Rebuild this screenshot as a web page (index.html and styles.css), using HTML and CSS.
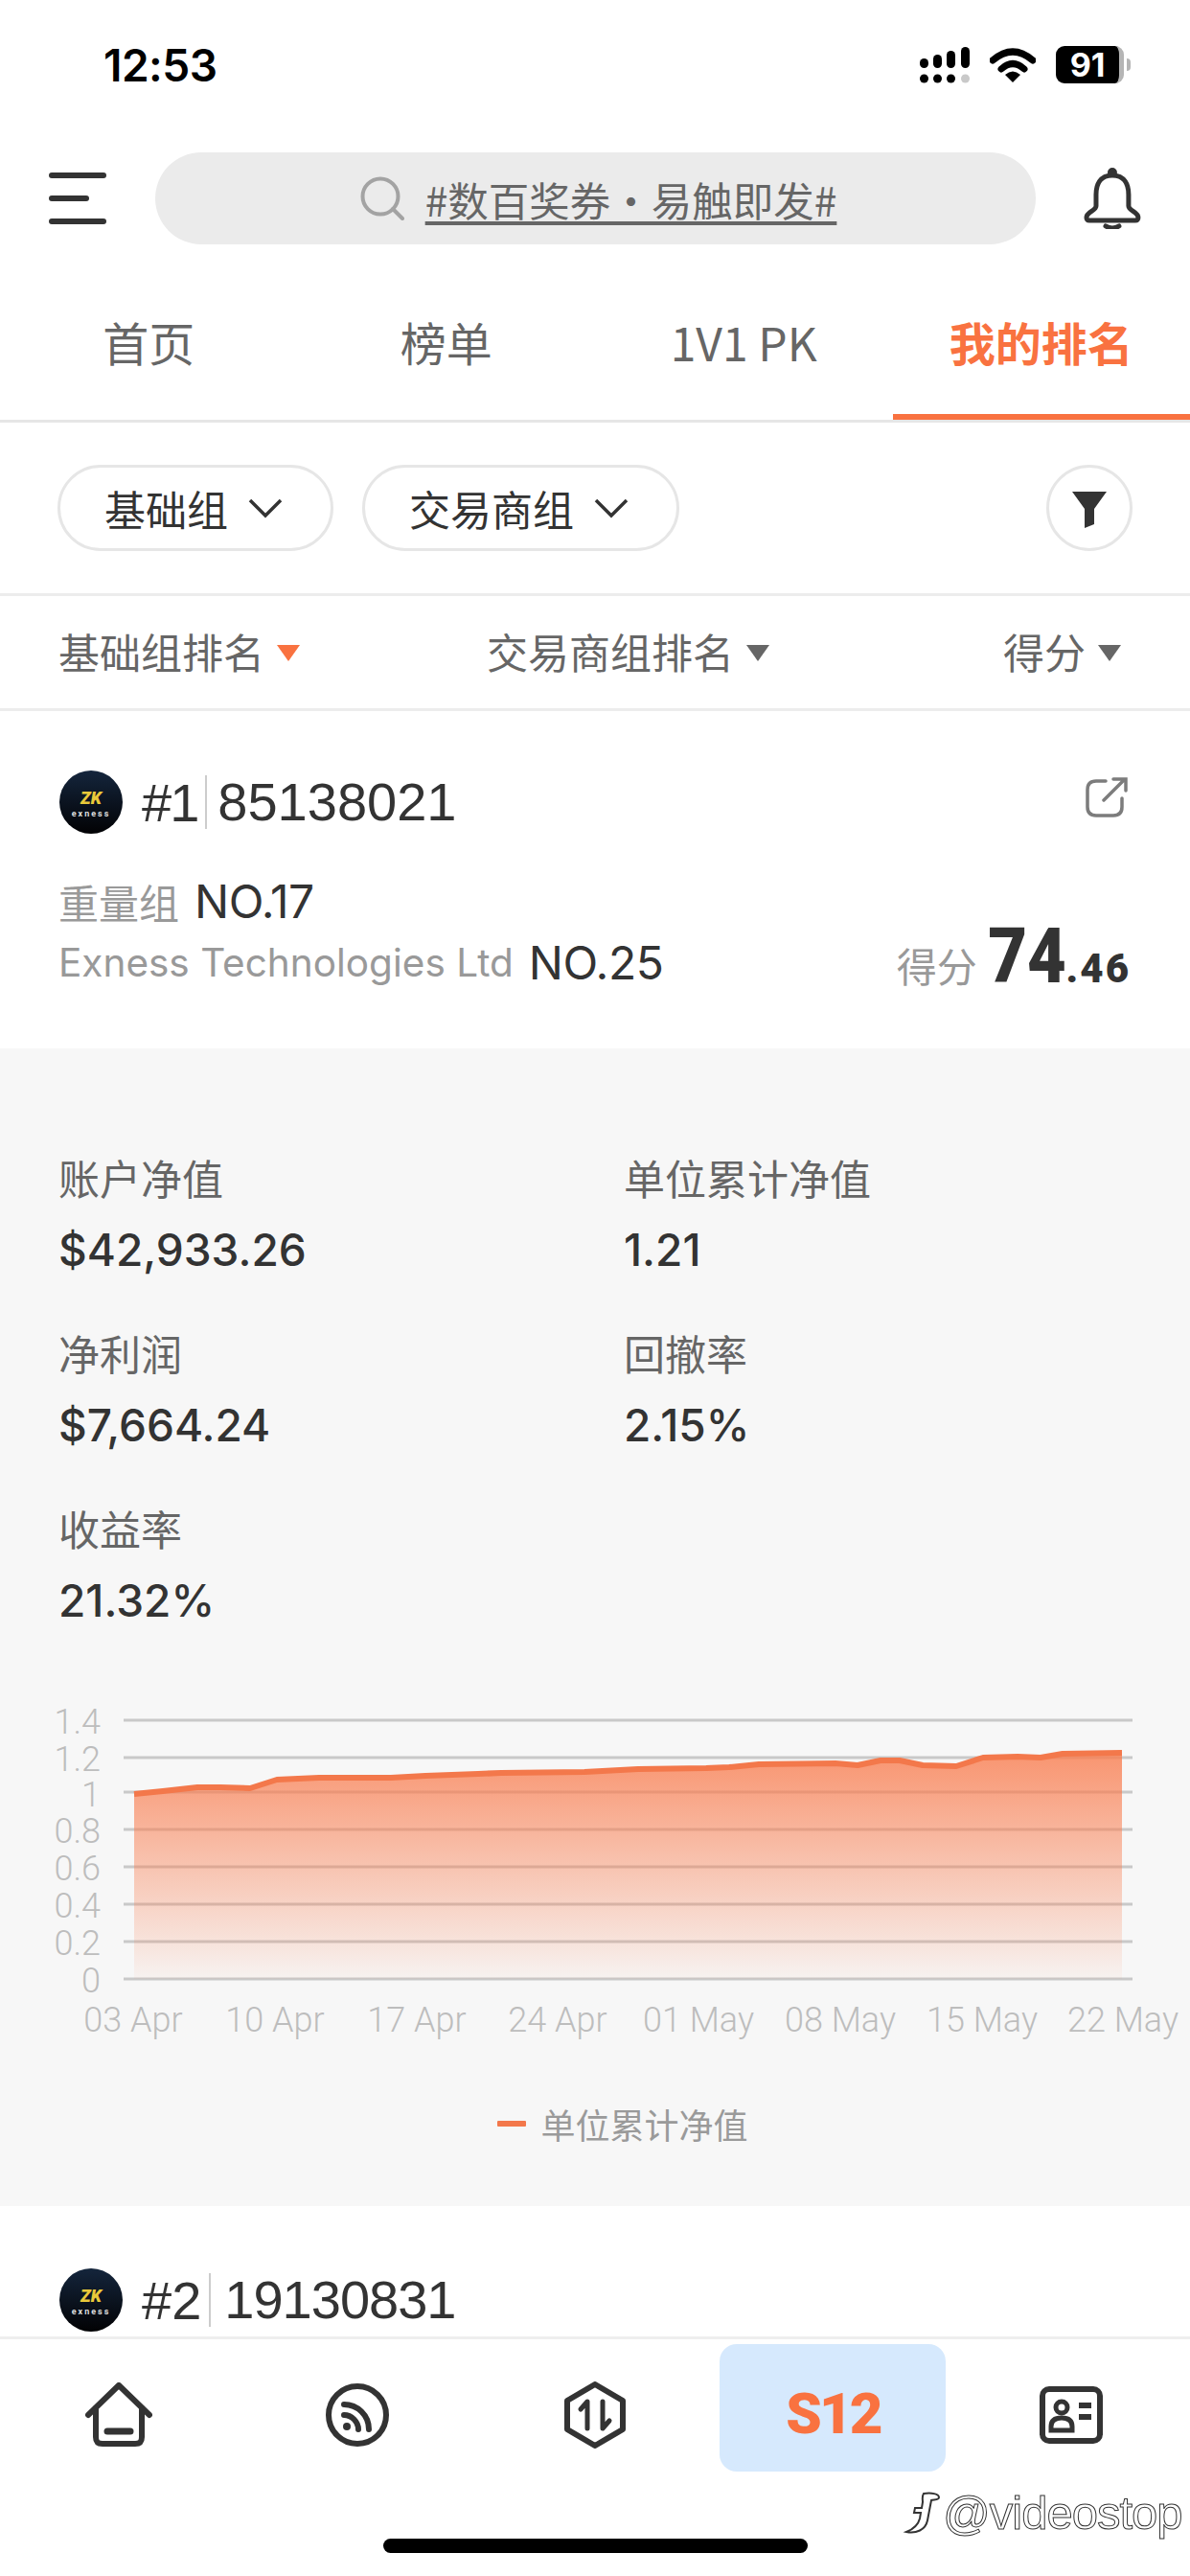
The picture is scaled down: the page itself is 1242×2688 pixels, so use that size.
FILE: index.html
```html
<!DOCTYPE html>
<html lang="zh-CN">
<head>
    <meta charset="UTF-8">
    <meta name="viewport" content="width=device-width, initial-scale=1.0">
    <title>我的排名</title>
    <link rel="stylesheet" href="styles.css">
</head>
<body>
    <div class="status-bar">
        <span class="time">12:53</span>
        <div class="status-icons">
            <svg class="signal" width="52" height="38" viewBox="0 0 52 38">
                <rect x="0" y="12" width="9" height="10" rx="4.5"/><rect x="14" y="8" width="9" height="14" rx="4.5"/><rect x="28" y="4" width="9" height="18" rx="4.5"/><rect x="43" y="0" width="9" height="22" rx="4.5"/>
                <circle cx="4.5" cy="33" r="4.5"/><circle cx="18.5" cy="33" r="4.5"/><circle cx="32.5" cy="33" r="4.5"/><circle cx="47.5" cy="33" r="4.5" fill="#c9c9c9"/>
            </svg>
            <svg class="wifi" width="48" height="36" viewBox="0 0 48 36">
                <path d="M3 13 Q24 -5 45 13" fill="none" stroke="#000" stroke-width="7" stroke-linecap="round"/>
                <path d="M12 22 Q24 11 36 22" fill="none" stroke="#000" stroke-width="7" stroke-linecap="round"/>
                <path d="M16 28 Q24 21 32 28 L24 36 Z"/>
            </svg>
            <div class="battery">
                <div class="battery-body">91</div>
                <div class="battery-tip"></div>
            </div>
        </div>
    </div>

    <header class="top-bar">
        <div class="menu-icon"><span></span><span class="short"></span><span></span></div>
        <div class="search">
            <svg width="46" height="46" viewBox="0 0 46 46" fill="none" stroke="#a3a3a3" stroke-width="4">
                <circle cx="21" cy="21" r="18.5"/>
                <path d="M34 34 L44 44" stroke-linecap="round"/>
            </svg>
            <span class="search-text">#数百奖券·易触即发#</span>
        </div>
        <svg class="bell" width="60" height="64" viewBox="0 0 60 64" fill="none" stroke="#333" stroke-width="5">
            <path d="M30 8 C17 8 13 18 13 28 V40 C13 45 3 46 3 52 C3 54 4 55 6 55 H54 C56 55 57 54 57 52 C57 46 47 45 47 40 V28 C47 18 43 8 30 8 Z"/>
            <circle cx="30" cy="5" r="2.5"/>
            <path d="M23 61 Q30 65 37 61" stroke-linecap="round"/>
        </svg>
    </header>

    <nav class="tabs">
        <a class="tab">首页</a>
        <a class="tab">榜单</a>
        <a class="tab">1V1 PK</a>
        <a class="tab active">我的排名</a>
    </nav>

    <div class="filter-row">
        <div class="pill">基础组
            <svg width="38" height="22" viewBox="0 0 36 22" fill="none" stroke="#333" stroke-width="3.5"><path d="M2 3 L18 19 L34 3"/></svg>
        </div>
        <div class="pill">交易商组
            <svg width="38" height="22" viewBox="0 0 36 22" fill="none" stroke="#333" stroke-width="3.5"><path d="M2 3 L18 19 L34 3"/></svg>
        </div>
        <div class="filter-btn">
            <svg width="36" height="38" viewBox="0 0 36 38" fill="#333"><path d="M0 0 H36 L23 18 V34 L13 38 V18 Z"/></svg>
        </div>
    </div>

    <div class="sort-row">
        <span class="sort-item sort-on">基础组排名</span>
        <span class="sort-item">交易商组排名</span>
        <span class="sort-item">得分</span>
    </div>

    <main class="list">
        <section class="card">
            <div class="card-title">
                <svg class="logo" width="66" height="66" viewBox="0 0 66 66">
                    <defs>
                        <linearGradient id="logoBg" x1="0" y1="0" x2="0" y2="1">
                            <stop offset="0" stop-color="#14253c"/>
                            <stop offset="1" stop-color="#020204"/>
                        </linearGradient>
                    </defs>
                    <circle cx="33" cy="33" r="33" fill="url(#logoBg)"/>
                    <text x="33" y="35" class="logo-mark">ZK</text>
                    <text x="33" y="48" class="logo-name">exness</text>
                </svg>
                <span class="rank">#1</span>
                <span class="account">85138021</span>
                <svg class="share" width="44" height="42" viewBox="0 0 44 42" fill="none" stroke="#7c7c7c" stroke-width="3.5" stroke-linecap="round">
                    <path d="M21 4 H11 C5 4 2 7 2 13 V31 C2 37 5 40 11 40 H29 C35 40 38 37 38 31 V22"/>
                    <path d="M19 24 L41 2 M29 2 H42 V14"/>
                </svg>
            </div>
            <div class="card-meta">
                <div>
                    <div class="meta-line"><span class="muted">重量组</span><b>NO.17</b></div>
                    <div class="meta-line"><span class="muted">Exness Technologies Ltd</span><b>NO.25</b></div>
                </div>
                <div class="score"><span class="muted">得分</span><span class="score-big">74</span><span class="score-small">.46</span></div>
            </div>
        </section>

        <section class="panel">
            <div class="stats">
                <div class="stat"><label>账户净值</label><strong>$42,933.26</strong></div>
                <div class="stat"><label>单位累计净值</label><strong>1.21</strong></div>
                <div class="stat"><label>净利润</label><strong>$7,664.24</strong></div>
                <div class="stat"><label>回撤率</label><strong>2.15%</strong></div>
                <div class="stat"><label>收益率</label><strong>21.32%</strong></div>
            </div>

            <svg class="chart" width="1242" height="370" viewBox="0 1770 1242 370">
                <defs>
                    <linearGradient id="areaFill" x1="0" y1="0" x2="0" y2="1">
                        <stop offset="0" stop-color="#f97c4e" stop-opacity="0.8"/>
                        <stop offset="1" stop-color="#f97c4e" stop-opacity="0.04"/>
                    </linearGradient>
                </defs>
                <g class="grid-lines">
                    <path d="M129 1795 H1182"/><path d="M129 1834 H1182"/><path d="M129 1870 H1182"/><path d="M129 1909 H1182"/>
                    <path d="M129 1948 H1182"/><path d="M129 1987 H1182"/><path d="M129 2026 H1182"/><path d="M129 2065 H1182"/>
                </g>
                <path fill="url(#areaFill)" d="M140 1872 L170 1869 L206 1865 L230 1865 L261 1866 L289 1857 L333 1855 L408 1855 L444 1853 L499 1851 L523 1850 L610 1849 L666 1846 L737 1845 L761 1844 L792 1841 L872 1840 L895 1842 L919 1837 L939 1837 L963 1842 L998 1843 L1026 1834 L1062 1833 L1086 1834 L1109 1830 L1171 1829 V2065 H140 Z"/>
                <path class="area-line" d="M140 1872 L170 1869 L206 1865 L230 1865 L261 1866 L289 1857 L333 1855 L408 1855 L444 1853 L499 1851 L523 1850 L610 1849 L666 1846 L737 1845 L761 1844 L792 1841 L872 1840 L895 1842 L919 1837 L939 1837 L963 1842 L998 1843 L1026 1834 L1062 1833 L1086 1834 L1109 1830 L1171 1829"/>
                <g class="y-labels">
                    <text x="105" y="1809">1.4</text><text x="105" y="1848">1.2</text><text x="105" y="1885">1</text><text x="105" y="1923">0.8</text>
                    <text x="105" y="1962">0.6</text><text x="105" y="2001">0.4</text><text x="105" y="2040">0.2</text><text x="105" y="2079">0</text>
                </g>
                <g class="x-labels">
                    <text x="139" y="2120">03 Apr</text><text x="287" y="2120">10 Apr</text><text x="435" y="2120">17 Apr</text><text x="582" y="2120">24 Apr</text>
                    <text x="729" y="2120">01 May</text><text x="877" y="2120">08 May</text><text x="1025" y="2120">15 May</text><text x="1172" y="2120">22 May</text>
                </g>
            </svg>

            <div class="legend"><i></i>单位累计净值</div>
        </section>

        <section class="card card-next">
            <div class="card-title">
                <svg class="logo" width="66" height="66" viewBox="0 0 66 66">
                    <circle cx="33" cy="33" r="33" fill="url(#logoBg)"/>
                    <text x="33" y="35" class="logo-mark">ZK</text>
                    <text x="33" y="48" class="logo-name">exness</text>
                </svg>
                <span class="rank">#2</span>
                <span class="account">19130831</span>
            </div>
        </section>
    </main>

    <footer class="bottom-nav">
        <a class="nav-item">
            <svg width="70" height="68" viewBox="0 0 70 68" fill="none" stroke="#333" stroke-width="6" stroke-linejoin="round" stroke-linecap="round">
                <path d="M3 34 L35 3 L67 34"/>
                <path d="M11 27 V57 C11 62 13 64 18 64 H52 C57 64 59 62 59 57 V27"/>
                <path d="M23 51 H47" stroke-width="7"/>
            </svg>
        </a>
        <a class="nav-item">
            <svg width="66" height="66" viewBox="0 0 66 66" fill="none" stroke="#333" stroke-width="6" stroke-linecap="round">
                <circle cx="33" cy="33" r="30"/>
                <path d="M19 22 C33 22 45 33 45 48"/>
                <path d="M19 33 C27 33 34 40 34 48"/>
                <circle cx="22" cy="45" r="4" fill="#333" stroke="none"/>
            </svg>
        </a>
        <a class="nav-item">
            <svg width="64" height="70" viewBox="0 0 64 70" fill="none" stroke="#333" stroke-width="6" stroke-linejoin="round" stroke-linecap="round">
                <path d="M32 3 L61 20 V50 L32 67 L3 50 V20 Z"/>
                <path d="M24 49 V21 L17 29" stroke-width="5"/>
                <path d="M40 21 V49 L47 41" stroke-width="5"/>
            </svg>
        </a>
        <a class="nav-item">
            <div class="s12-box"><span>S12</span></div>
        </a>
        <a class="nav-item">
            <svg width="66" height="60" viewBox="0 0 66 60" fill="none" stroke="#333" stroke-width="6">
                <rect x="3" y="3" width="60" height="54" rx="7"/>
                <circle cx="23" cy="22" r="6" stroke-width="5"/>
                <path d="M12 46 V42 C12 36 16 33 23 33 C30 33 34 36 34 42 V46 Z" stroke-width="5"/>
                <path d="M41 20 H54 M41 32 H54" stroke-width="6"/>
            </svg>
        </a>
    </footer>

    <div class="watermark">
        <svg width="40" height="44" viewBox="0 0 40 44" fill="#fff" stroke="#333" stroke-width="2">
            <path d="M22 2 C30 1 38 2 38 6 C38 9 32 8 30 9 L26 30 C24 40 14 44 4 42 C9 40 16 36 18 28 L19 22 H12 L13 17 H20 L21 11 C21 8 20 5 22 2 Z"/>
        </svg>
        <span>@videostop</span>
    </div>
    <div class="home-indicator"></div>
</body>
</html>
```

FILE: styles.css
```css
* {
    box-sizing: border-box;
}

html, body {
    margin: 0;
    padding: 0;
}

body {
    position: relative;
    width: 1242px;
    height: 2688px;
    overflow: hidden;
    background: #fff;
    color: #333;
    font-family: Inter, "Noto Sans CJK SC", sans-serif;
    display: flex;
    flex-direction: column;
}

/* status bar */
.status-bar {
    height: 135px;
    flex-shrink: 0;
    display: flex;
    align-items: center;
    justify-content: space-between;
    padding: 0 62px 0 108px;
}

.time {
    font-family: Inter, sans-serif;
    font-size: 46px;
    font-weight: 600;
    letter-spacing: -0.5px;
    color: #000;
}

.status-icons {
    display: flex;
    align-items: center;
    gap: 21px;
}

.battery {
    display: flex;
    align-items: center;
    gap: 3px;
}

.battery-body {
    width: 71px;
    height: 39px;
    background: #000;
    color: #fff;
    border-radius: 9px;
    border-right: 5px solid #b5b5b5;
    font-family: Inter, sans-serif;
    font-size: 34px;
    font-weight: 700;
    line-height: 39px;
    text-align: center;
}

.battery-tip {
    width: 4px;
    height: 13px;
    background: #b5b5b5;
    border-radius: 0 4px 4px 0;
}

/* search bar */
.top-bar {
    height: 144px;
    flex-shrink: 0;
    display: flex;
    align-items: center;
    padding: 0 51px;
}

.menu-icon {
    width: 60px;
    display: flex;
    flex-direction: column;
    gap: 18px;
}

.menu-icon span {
    display: block;
    height: 6px;
    border-radius: 3px;
    background: #333;
}

.menu-icon .short {
    width: 42px;
}

.search {
    width: 921px;
    height: 96px;
    margin-left: 51px;
    padding-left: 6px;
    border-radius: 48px;
    background: #ebebeb;
    display: flex;
    align-items: center;
    justify-content: center;
    gap: 22px;
}

.search-text {
    font-family: "Noto Sans CJK SC", sans-serif;
    font-size: 42.5px;
    color: #666;
    text-decoration: underline;
    text-underline-offset: 5px;
}

.bell {
    margin-left: 50px;
}

/* tabs */
.tabs {
    height: 162px;
    flex-shrink: 0;
    display: grid;
    grid-template-columns: repeat(4, 1fr);
    border-bottom: 3px solid #e6e6e6;
}

.tab {
    display: flex;
    align-items: center;
    justify-content: center;
    border-bottom: 6px solid transparent;
    font-family: "Noto Sans CJK SC", sans-serif;
    font-size: 48px;
    color: #666;
}

.tab.active {
    color: #f97240;
    font-weight: 700;
    border-bottom-color: #f97240;
}

/* filters */
.filter-row {
    height: 181px;
    flex-shrink: 0;
    display: flex;
    align-items: center;
    gap: 30px;
    padding: 1px 60px 1px 60px;
    border-bottom: 3px solid #ececec;
}

.pill {
    height: 90px;
    padding: 0 49px 0 46px;
    display: flex;
    align-items: center;
    gap: 20px;
    border: 3px solid #e6e6e6;
    border-radius: 45px;
    font-family: "Noto Sans CJK SC", sans-serif;
    font-size: 43px;
    color: #333;
}

.filter-btn {
    width: 90px;
    height: 90px;
    margin-left: auto;
    border: 3px solid #e6e6e6;
    border-radius: 50%;
    display: flex;
    align-items: center;
    justify-content: center;
    padding-top: 4px;
}

.sort-row {
    height: 120px;
    flex-shrink: 0;
    display: grid;
    grid-template-columns: 447px 1fr auto;
    align-items: center;
    padding: 0 72px 3px 61px;
    border-bottom: 3px solid #ececec;
}

.sort-item {
    display: flex;
    align-items: center;
    gap: 13px;
    font-family: "Noto Sans CJK SC", sans-serif;
    font-size: 43px;
    color: #666;
}

.sort-item::after {
    content: "";
    margin-top: 5px;
    border-left: 12px solid transparent;
    border-right: 12px solid transparent;
    border-top: 17px solid #666;
}

.sort-item.sort-on::after {
    border-top-color: #f97240;
}

/* ranking list */
.list {
    flex: 1;
    min-height: 0;
    overflow: hidden;
}

.card {
    height: 352px;
    padding: 62px 62px 0 61px;
}

.card-next {
    height: auto;
    padding-top: 65px;
}

.card-title {
    display: flex;
    align-items: center;
    height: 66px;
}

.logo {
    flex-shrink: 0;
    margin-left: 1px;
}

.logo-mark {
    font-family: Roboto, sans-serif;
    font-size: 18px;
    font-weight: 900;
    font-style: italic;
    fill: #e9c93a;
    text-anchor: middle;
}

.logo-name {
    font-family: Roboto, sans-serif;
    font-size: 9px;
    font-weight: 700;
    letter-spacing: 2px;
    fill: #dedede;
    text-anchor: middle;
}

.rank {
    margin-left: 20px;
    padding-right: 8px;
    font-family: "Liberation Sans", sans-serif;
    font-size: 56px;
    letter-spacing: -2px;
    color: #333;
}

.account {
    padding-left: 11px;
    border-left: 2px solid #ccc;
    font-family: "Liberation Sans", sans-serif;
    font-size: 56px;
    line-height: 56px;
    color: #333;
}

.card-next .rank {
    letter-spacing: 0;
}

.card-next .account {
    padding-left: 14px;
    letter-spacing: -1px;
}

.share {
    margin-left: auto;
    margin-right: 3px;
    margin-bottom: 10px;
}

.card-meta {
    display: flex;
    justify-content: space-between;
    align-items: flex-end;
    margin-top: 38px;
}

.meta-line {
    height: 64px;
    display: flex;
    align-items: center;
    gap: 16px;
    font-size: 42px;
}

.meta-line b {
    font-weight: 400;
    font-size: 48px;
    letter-spacing: -0.5px;
    color: #333;
}

.muted {
    font-family: Inter, "Noto Sans CJK SC", sans-serif;
    font-size: 40.5px;
    color: #999;
}

.meta-line:first-child .muted {
    font-size: 42px;
}

.score {
    display: flex;
    align-items: baseline;
    margin-bottom: -2px;
}

.score .muted {
    font-size: 42px;
    margin-right: 0;
}

/* the big digits are a narrow black face in the reference */
.score-big {
    display: inline-block;
    font-family: Roboto, sans-serif;
    font-size: 80px;
    font-weight: 900;
    line-height: 80px;
    color: #333;
    transform: scaleX(0.88);
    transform-origin: right;
}

.score-small {
    font-family: Roboto, sans-serif;
    font-size: 42px;
    font-weight: 900;
    letter-spacing: 2px;
    color: #333;
}

/* stats and chart */
.panel {
    height: 1208px;
    background: #f7f7f7;
    overflow: hidden;
}

.stats {
    display: grid;
    grid-template-columns: 590px 1fr;
    grid-auto-rows: 183px;
    padding: 105px 62px 0 61px;
    height: 676px;
}

.stat {
    display: flex;
    flex-direction: column;
    gap: 18px;
}

.stat label {
    font-family: "Noto Sans CJK SC", sans-serif;
    font-size: 43px;
    line-height: 58px;
    color: #666;
}

.stat strong {
    font-size: 46px;
    line-height: 58px;
    font-weight: 500;
    color: #333;
}

.chart {
    display: block;
}

.grid-lines path {
    stroke: #c9c9c9;
    stroke-width: 3;
}

.area-line {
    fill: none;
    stroke: #f3784b;
    stroke-width: 6;
    stroke-linejoin: round;
}

.y-labels text,
.x-labels text {
    font-family: Roboto, sans-serif;
    font-weight: 300;
    font-size: 36px;
    fill: #bdbdbd;
}

.y-labels text {
    text-anchor: end;
}

.x-labels text {
    text-anchor: middle;
}

.legend {
    margin-top: 50px;
    padding-left: 58px;
    display: flex;
    align-items: center;
    justify-content: center;
    gap: 15px;
    font-family: "Noto Sans CJK SC", sans-serif;
    font-size: 36px;
    color: #9a9a9a;
}

.legend i {
    width: 30px;
    height: 6px;
    border-radius: 1px;
    background: #f3784b;
}

/* bottom navigation */
.bottom-nav {
    height: 250px;
    flex-shrink: 0;
    background: #fff;
    border-top: 3px solid #eee;
    display: grid;
    grid-template-columns: repeat(5, 1fr);
    align-items: start;
}

.nav-item {
    height: 150px;
    display: flex;
    align-items: center;
    justify-content: center;
    padding-top: 8px;
}

.s12-box {
    width: 236px;
    height: 133px;
    margin-top: -16px;
    border-radius: 18px;
    background: #d6e9fd;
    display: flex;
    align-items: center;
    justify-content: center;
}

.s12-box span {
    margin-top: 12px;
    font-family: Roboto, sans-serif;
    font-size: 60px;
    font-weight: 900;
    letter-spacing: -3px;
    color: #f97240;
}

.watermark {
    position: absolute;
    left: 942px;
    top: 2594px;
    display: flex;
    align-items: center;
    gap: 2px;
    font-family: "Liberation Sans", sans-serif;
    font-size: 49px;
    letter-spacing: -1px;
    color: #fff;
    -webkit-text-stroke: 1px #333;
}

.home-indicator {
    position: absolute;
    left: 400px;
    top: 2649px;
    width: 443px;
    height: 15px;
    border-radius: 8px;
    background: #000;
}
```
